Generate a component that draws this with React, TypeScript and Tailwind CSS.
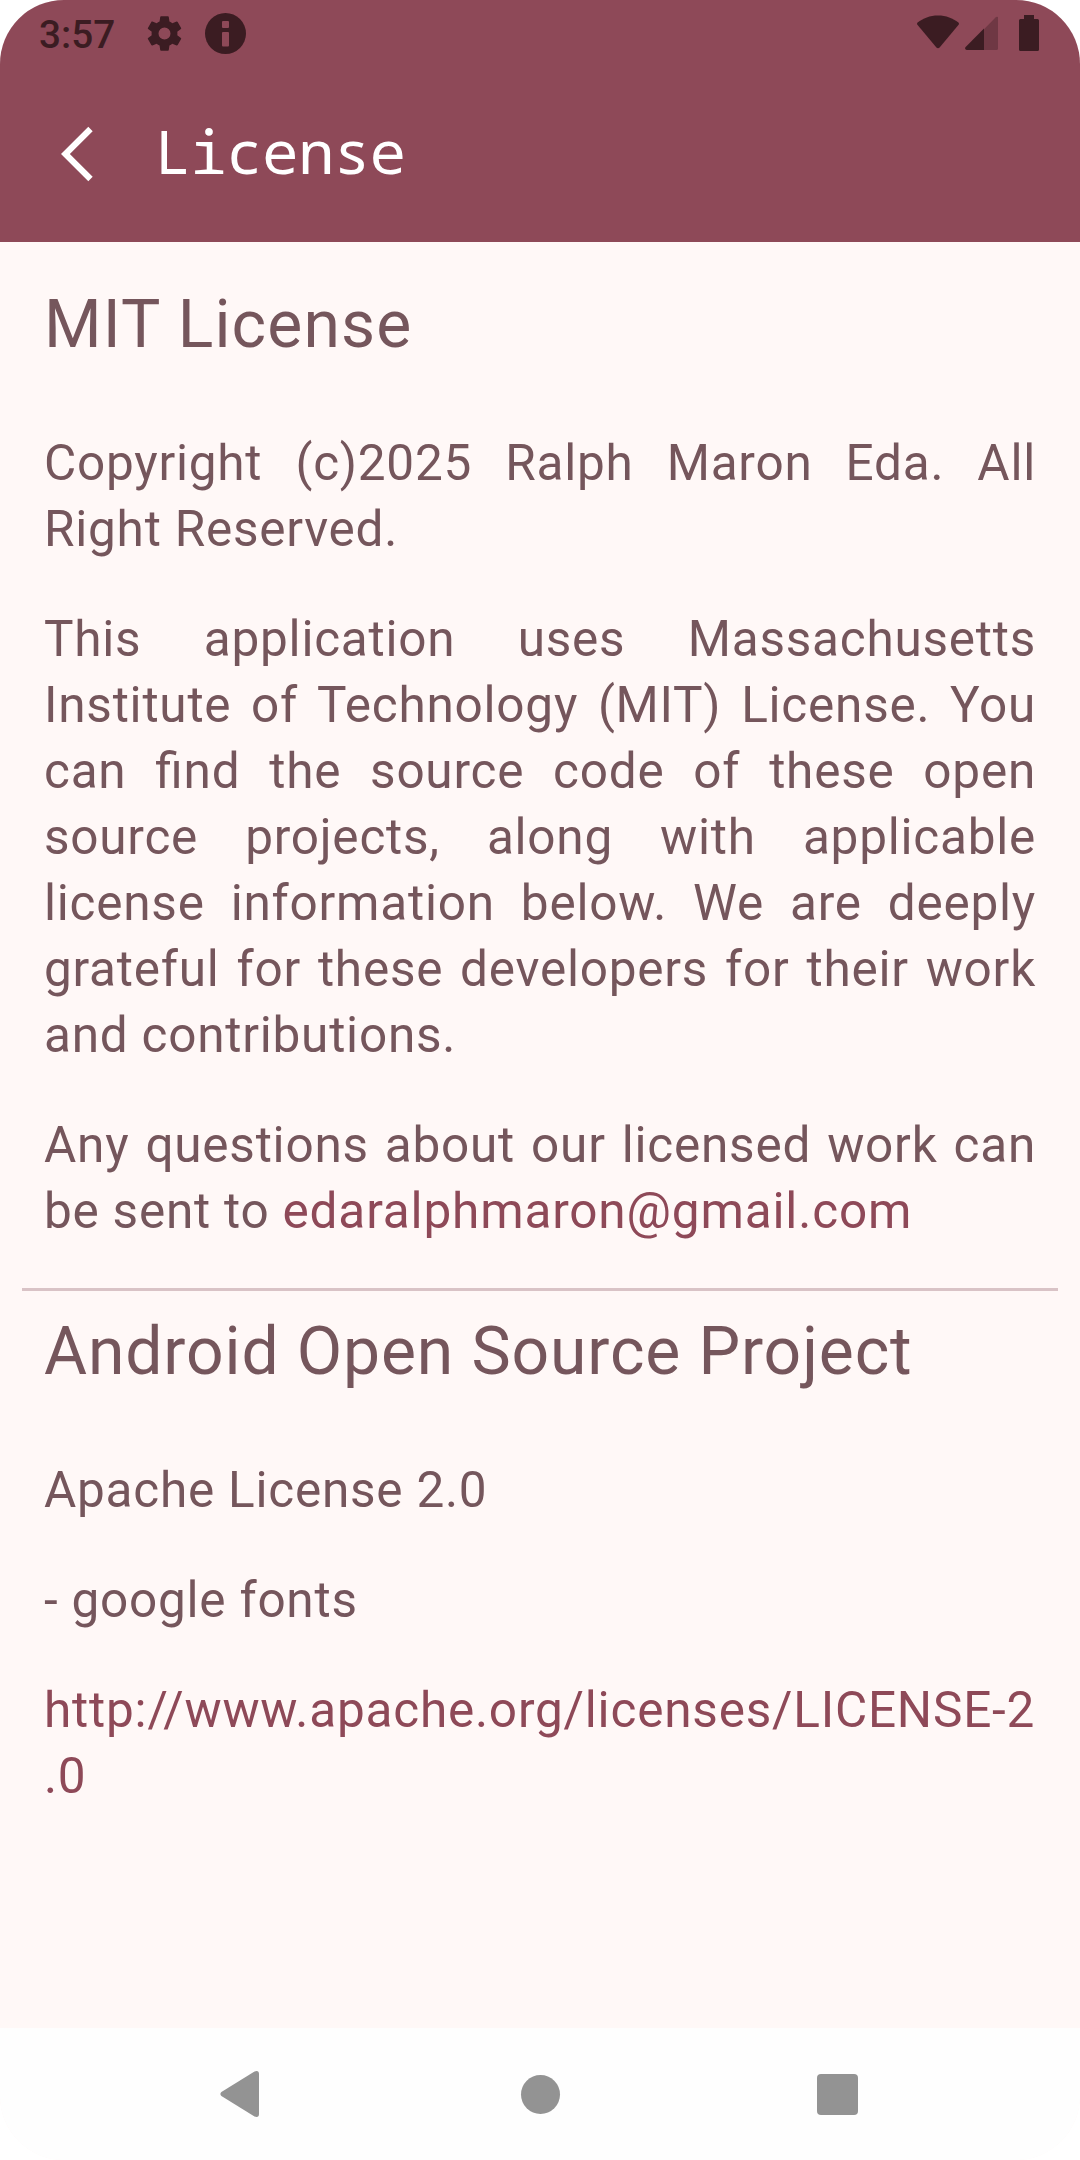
function StatusBar() {
  return (
    <div className="flex h-[66px] items-start justify-between text-[#3b1c22]">
      <div className="flex h-[66px] items-center pl-[39px]">
        <span className="mt-[4px] w-[104px] text-[38.7px] font-medium leading-[44px]">3:57</span>
        <svg className="mt-px h-[43px] w-[43px]" viewBox="0 0 24 24" fill="currentColor">
          <path d="M19.14 12.94c.04-.3.06-.61.06-.94 0-.32-.02-.64-.07-.94l2.03-1.58a.49.49 0 0 0 .12-.61l-1.92-3.32a.488.488 0 0 0-.59-.22l-2.39.96c-.5-.38-1.03-.7-1.62-.94l-.36-2.54a.484.484 0 0 0-.48-.41h-3.84c-.24 0-.43.17-.47.41l-.36 2.54c-.59.24-1.13.57-1.62.94l-2.39-.96c-.22-.08-.47 0-.59.22L2.74 8.87c-.12.21-.08.47.12.61l2.03 1.58c-.05.3-.09.63-.09.94s.02.64.07.94l-2.03 1.58a.49.49 0 0 0-.12.61l1.92 3.32c.12.22.37.29.59.22l2.39-.96c.5.38 1.03.7 1.62.94l.36 2.54c.05.24.24.41.48.41h3.84c.24 0 .44-.17.47-.41l.36-2.54c.59-.24 1.13-.56 1.62-.94l2.39.96c.22.08.47 0 .59-.22l1.92-3.32c.12-.22.07-.47-.12-.61l-2.01-1.58zM12 15.35A3.35 3.35 0 1 1 12 8.65a3.35 3.35 0 0 1 0 6.7z" />
        </svg>
        <svg className="ml-[19px] h-[41px] w-[41px]" viewBox="0 0 41 41">
          <circle cx="20.5" cy="20.5" r="20.5" fill="currentColor" />
          <rect x="17" y="8" width="7" height="7" rx="1" fill="#8e4958" />
          <rect x="17" y="19" width="7" height="14.5" rx="1" fill="#8e4958" />
        </svg>
      </div>
      <div className="flex h-[66px] items-start pr-[41px] pt-[15px]">
        <svg className="h-[37px] w-[42px]" viewBox="0 0 42 37" fill="currentColor">
          <path d="M.6 7.6C6 3 13 .4 21 .4S36 3 41.4 7.6Q42.4 8.5 41.6 9.8L22.6 32.4Q21 34 19.4 32.4L.4 9.8Q-.4 8.5.6 7.6Z" />
        </svg>
        <svg className="ml-[6px] h-[37px] w-[34px]" viewBox="0 0 34 37" fill="currentColor">
          <path d="M19 14.2 30.5 2.5Q31.6 1.4 33 2.1V33.5Q33 35 31.5 35H19Z" opacity="0.36" />
          <path d="M19 13.5V35H1.8Q-.4 34.6.4 32.3Z" />
        </svg>
        <svg className="ml-[20px] h-[37px] w-[20px]" viewBox="0 0 20 37" fill="currentColor">
          <path d="M5 0H15V4H18.5Q20 4 20 5.5V34.5Q20 36 18.5 36H1.5Q0 36 0 34.5V5.5Q0 4 1.5 4H5Z" />
        </svg>
      </div>
    </div>
  );
}

export default function App() {
  return (
    <div className="h-[2160px] w-[1080px] bg-white">
      <div className="flex h-full flex-col overflow-hidden rounded-[64px] bg-[#fff8f7] font-[Roboto,sans-serif] text-[#75565c]">
        <header className="flex h-[242px] flex-col bg-[#8e4958]">
          <StatusBar />
          <div className="flex h-[176px] items-center pl-[58px]">
            <svg className="h-[60px] w-[38px]" viewBox="0 0 38 60" fill="none" stroke="white" strokeWidth="6.2">
              <path d="M32.5 5 7.4 30 32.5 55" />
            </svg>
            <h1 className="mb-[7px] ml-[58.5px] font-['Noto_Sans_Mono','DejaVu_Sans_Mono',monospace] text-[61px] tracking-[-0.75px] text-white">License</h1>
          </div>
        </header>
        <main className="flex h-[1786px] flex-col px-[44px] pt-[39px] text-[49.5px] leading-[66px] tracking-[0.76px] [font-feature-settings:'liga'_1]">
          <h2 className="text-[66px] leading-[88px] tracking-[1.15px]">MIT License</h2>
          <p className="mt-[61px] text-justify">Copyright (c)2025 Ralph Maron Eda. All Right Reserved.</p>
          <p className="mt-[44px] text-justify">This application uses Massachusetts Institute of Technology (MIT) License. You can find the source code of these open source projects, along with applicable license information below. We are deeply grateful for these developers for their work and contributions.</p>
          <p className="mt-[44px] text-justify">Any questions about our licensed work can be sent to <a className="tracking-[0.84px] text-[#8e4958]">edaralphmaron@gmail.com</a></p>
          <div className="-mx-[22px] mt-[44px] h-[3px] shrink-0 bg-[#d9c3c6]" />
          <h2 className="mt-[17px] text-[66px] leading-[88px] tracking-[0.88px]">Android Open Source Project</h2>
          <p className="mt-[61px]">Apache License 2.0</p>
          <p className="mt-[44px]">- google fonts</p>
          <a className="mt-[44px] whitespace-nowrap tracking-[0.79px] text-[#8e4958]">http://www.apache.org/licenses/LICENSE-2<br />.0</a>
        </main>
        <nav className="flex h-[132px] items-center bg-[#fefefe] pl-[220px] text-[#939393]">
          <svg className="h-[48px] w-[40px]" viewBox="0 0 40 48" fill="currentColor">
            <path d="M1.4 22 34.5 1.5Q39 0 39 4V44Q39 48 34.5 46.5L1.4 26Q-.6 24 1.4 22Z" />
          </svg>
          <span className="ml-[261px] h-[39px] w-[39px] rounded-full bg-[#939393]" />
          <span className="ml-[257px] h-[41px] w-[41px] rounded-[4px] bg-[#939393]" />
        </nav>
      </div>
    </div>
  );
}
